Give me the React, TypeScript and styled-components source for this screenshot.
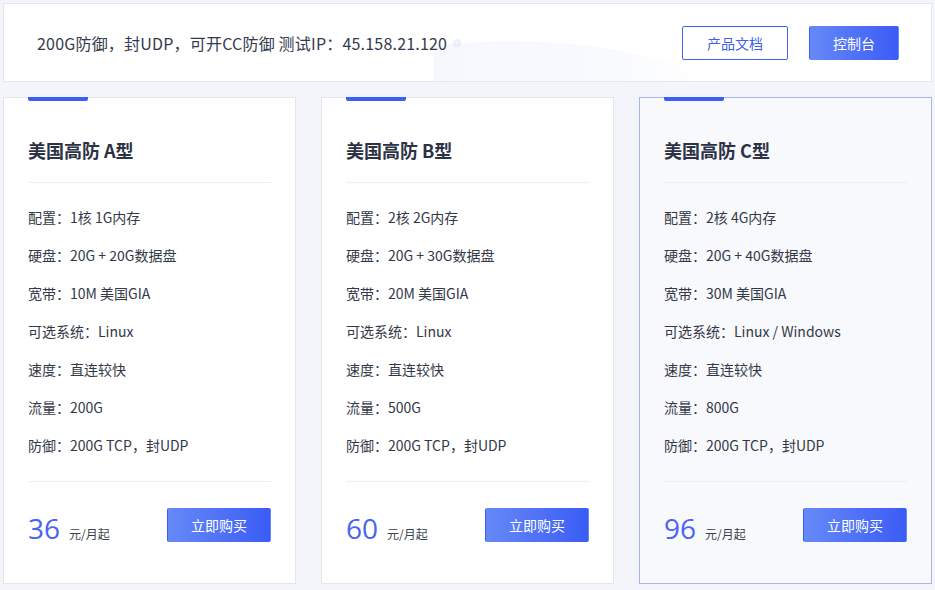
import styled, { createGlobalStyle } from "styled-components";

const GlobalStyle = createGlobalStyle`
  html, body {
    margin: 0;
    padding: 0;
    background: #f4f5fa;
  }
  body {
    font-family: "Noto Sans CJK SC", "Noto Sans", sans-serif;
    color: #2f3545;
  }
`;

const Page = styled.div`
  padding: 3px;
  display: flex;
  flex-direction: column;
  gap: 15px;
`;

const Header = styled.div`
  position: relative;
  overflow: hidden;
  height: 77px;
  background: #fff;
  border: 1px solid #e4e7ef;
  display: flex;
  align-items: center;
  padding: 0 32px 0 33px;
`;

const Wave = styled.svg`
  position: absolute;
  left: 430px;
  top: 0;
  width: 320px;
  height: 79px;
  pointer-events: none;
`;

const Notice = styled.div`
  position: relative;
  flex: 1;
  font-size: 16px;
  letter-spacing: 0.2px;
  color: #343a4e;
  display: flex;
  align-items: center;
  gap: 6px;
`;

const Dot = styled.span`
  width: 8px;
  height: 8px;
  border-radius: 50%;
  background: radial-gradient(circle at 40% 40%, #f5f7ff, #dde5fb);
`;

const Button = styled.button<{ $outline?: boolean; $w: number }>`
  position: relative;
  width: ${(p) => p.$w}px;
  height: 34px;
  border-radius: 2px;
  font-family: inherit;
  font-size: 14px;
  cursor: pointer;
  border: 1px solid ${(p) => (p.$outline ? "#3f63f0" : "transparent")};
  color: ${(p) => (p.$outline ? "#3f5ff0" : "#fff")};
  background: ${(p) =>
    p.$outline ? "#fff" : "linear-gradient(90deg, #6689f7 0%, #3b5cf5 100%)"};
  padding: 0;
`;

const HeaderActions = styled.div`
  display: flex;
  gap: 21px;
`;

const Cards = styled.div`
  display: grid;
  grid-template-columns: repeat(3, 293px);
  justify-content: space-between;
`;

const Card = styled.div<{ $active?: boolean }>`
  border: 1px solid ${(p) => (p.$active ? "#a8b5ef" : "#e3e6ef")};
  background: ${(p) => (p.$active ? "#f8f9fc" : "#fff")};
  padding: 0 24px 41px 24px;
  height: 487px;
  box-sizing: border-box;
`;

const Tab = styled.div`
  width: 60px;
  height: 4px;
  margin-top: -1px;
  background: #3d5ef5;
  border-radius: 0 0 2px 2px;
`;

const Title = styled.div`
  font-size: 18px;
  font-weight: 700;
  line-height: 24px;
  color: #2c3245;
  padding: 37px 0 20px;
  border-bottom: 1px solid #ebeef6;
`;

const Specs = styled.ul`
  list-style: none;
  margin: 0;
  padding: 15px 0 17px;
  border-bottom: 1px solid #ebeef6;
`;

const Spec = styled.li`
  font-size: 14px;
  line-height: 38px;
  color: #333847;
`;

const Footer = styled.div`
  display: flex;
  align-items: center;
  justify-content: space-between;
  padding-top: 26px;
`;

const Price = styled.div`
  display: flex;
  align-items: baseline;
  gap: 9px;
  padding-top: 6px;
`;

const Amount = styled.span`
  font-family: "Open Sans", sans-serif;
  font-size: 28px;
  line-height: 1;
  color: #4a63f2;
`;

const Unit = styled.span`
  font-size: 12px;
  color: #3a3f4e;
`;

const plans = [
  {
    name: "美国高防 A型",
    specs: ["配置：1核 1G内存", "硬盘：20G + 20G数据盘", "宽带：10M 美国GIA", "可选系统：Linux", "速度：直连较快", "流量：200G", "防御：200G TCP，封UDP"],
    price: 36,
  },
  {
    name: "美国高防 B型",
    specs: ["配置：2核 2G内存", "硬盘：20G + 30G数据盘", "宽带：20M 美国GIA", "可选系统：Linux", "速度：直连较快", "流量：500G", "防御：200G TCP，封UDP"],
    price: 60,
  },
  {
    name: "美国高防 C型",
    specs: ["配置：2核 4G内存", "硬盘：20G + 40G数据盘", "宽带：30M 美国GIA", "可选系统：Linux / Windows", "速度：直连较快", "流量：800G", "防御：200G TCP，封UDP"],
    price: 96,
    active: true,
  },
];

export default function App() {
  return (
    <>
      <GlobalStyle />
      <Page>
        <Header>
          <Wave viewBox="0 0 320 79" preserveAspectRatio="none">
            <defs>
              <linearGradient id="wv" x1="0" y1="0" x2="1" y2="0">
                <stop offset="0" stopColor="#f2f5fe" stopOpacity="0.7" />
                <stop offset="0.6" stopColor="#f5f7fe" stopOpacity="0.6" />
                <stop offset="1" stopColor="#ffffff" stopOpacity="0" />
              </linearGradient>
            </defs>
            <path d="M0 42 C60 34 150 32 250 62 C280 70 300 78 310 79 L0 79 Z" fill="url(#wv)" />
          </Wave>
          <Notice>
            200G防御，封UDP，可开CC防御 测试IP：45.158.21.120
            <Dot />
          </Notice>
          <HeaderActions>
            <Button $outline $w={106}>产品文档</Button>
            <Button $w={90}>控制台</Button>
          </HeaderActions>
        </Header>
        <Cards>
          {plans.map((p) => (
            <Card key={p.name} $active={p.active}>
              <Tab />
              <Title>{p.name}</Title>
              <Specs>
                {p.specs.map((s) => (
                  <Spec key={s}>{s}</Spec>
                ))}
              </Specs>
              <Footer>
                <Price>
                  <Amount>{p.price}</Amount>
                  <Unit>元/月起</Unit>
                </Price>
                <Button $w={104}>立即购买</Button>
              </Footer>
            </Card>
          ))}
        </Cards>
      </Page>
    </>
  );
}
